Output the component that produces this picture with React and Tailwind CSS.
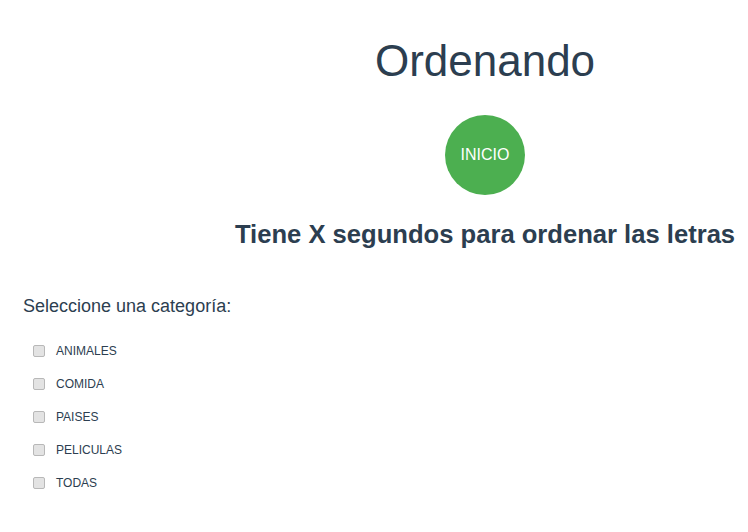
export default function App() {
  const cats = ["ANIMALES", "COMIDA", "PAISES", "PELICULAS", "TODAS"];
  return (
    <div className="w-[748px] h-[532px] overflow-hidden bg-white">
      <div
        className="w-[970px] text-[#2c3e50]"
        style={{ fontFamily: '"Liberation Sans", Arial, sans-serif' }}
      >
        <div className="pt-[36px] text-center">
          <h1 className="text-[44px] leading-[50px] font-normal">Ordenando</h1>
          <div className="mt-[29px] flex justify-center">
            <button className="w-[80px] h-[80px] rounded-full bg-[#4caf50] text-white text-[16px] leading-none">
              INICIO
            </button>
          </div>
          <h2 className="mt-[24px] text-[25.6px] leading-[30px] font-bold">
            Tiene X segundos para ordenar las letras
          </h2>
        </div>
        <p className="mt-[45px] pl-[23px] text-[18px] leading-[24px]">
          Seleccione una categoría:
        </p>
        <div className="mt-[16px] flex flex-col">
          {cats.map((c) => (
            <label key={c} className="h-[33px] flex items-center pl-[33px]">
              <span className="w-[12px] h-[12px] rounded-[2px] border border-[#b8b8b8] bg-[#e3e3e3]" />
              <span className="ml-[11px] text-[12px] leading-none">{c}</span>
            </label>
          ))}
        </div>
      </div>
    </div>
  );
}
